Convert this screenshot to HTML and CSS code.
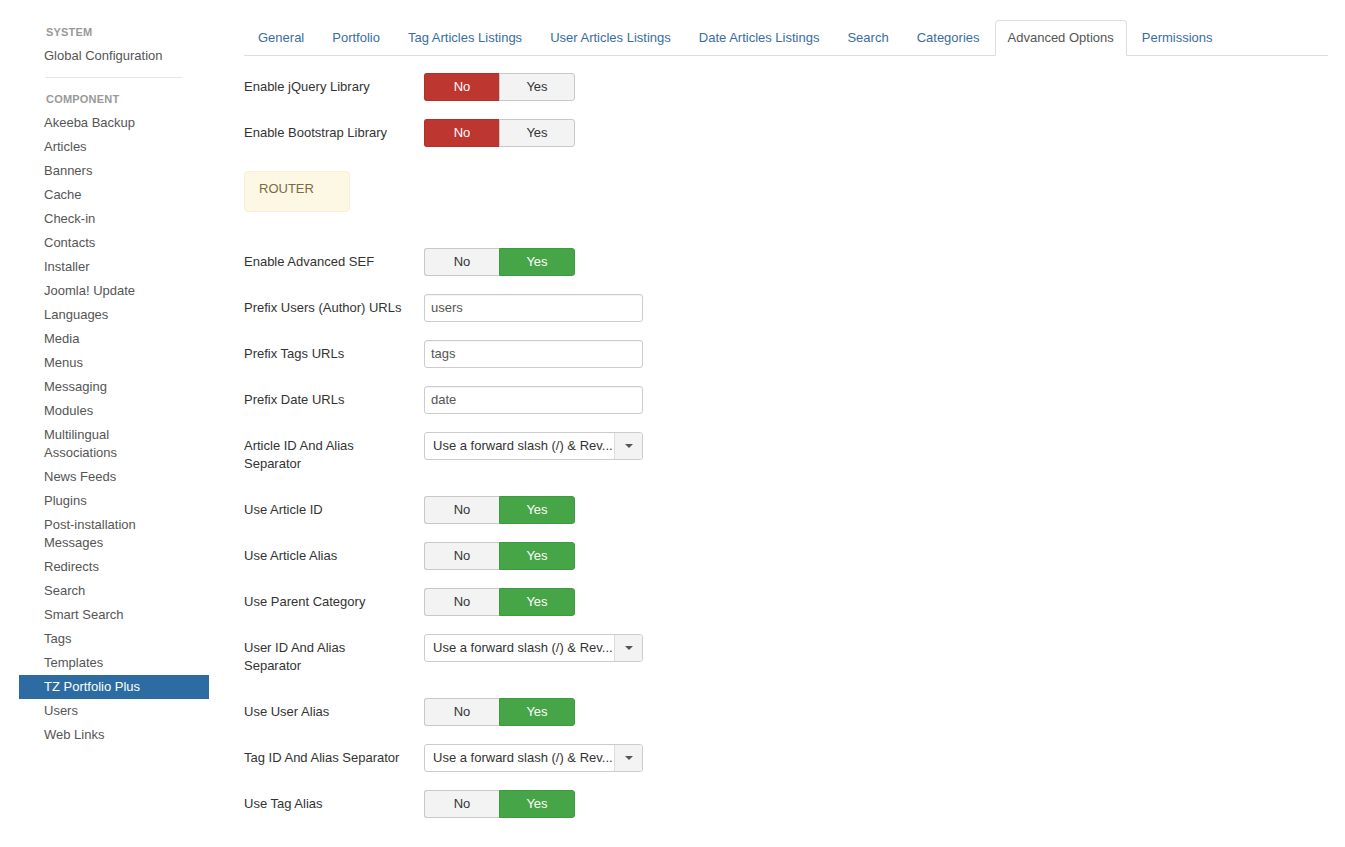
FILE: index.html
```html
<!DOCTYPE html>
<html>
<head>
<meta charset="utf-8">
<link rel="stylesheet" href="styles.css">
</head>
<body>
<div class="page">
  <aside class="sidebar">
    <div class="nav-header">System</div>
    <a class="nav-item" href="#">Global Configuration</a>
    <div class="divider"></div>
    <div class="nav-header">Component</div>
    <a class="nav-item" href="#">Akeeba Backup</a>
    <a class="nav-item" href="#">Articles</a>
    <a class="nav-item" href="#">Banners</a>
    <a class="nav-item" href="#">Cache</a>
    <a class="nav-item" href="#">Check-in</a>
    <a class="nav-item" href="#">Contacts</a>
    <a class="nav-item" href="#">Installer</a>
    <a class="nav-item" href="#">Joomla! Update</a>
    <a class="nav-item" href="#">Languages</a>
    <a class="nav-item" href="#">Media</a>
    <a class="nav-item" href="#">Menus</a>
    <a class="nav-item" href="#">Messaging</a>
    <a class="nav-item" href="#">Modules</a>
    <a class="nav-item" href="#">Multilingual Associations</a>
    <a class="nav-item" href="#">News Feeds</a>
    <a class="nav-item" href="#">Plugins</a>
    <a class="nav-item" href="#">Post-installation Messages</a>
    <a class="nav-item" href="#">Redirects</a>
    <a class="nav-item" href="#">Search</a>
    <a class="nav-item" href="#">Smart Search</a>
    <a class="nav-item" href="#">Tags</a>
    <a class="nav-item" href="#">Templates</a>
    <a class="nav-item active" href="#">TZ Portfolio Plus</a>
    <a class="nav-item" href="#">Users</a>
    <a class="nav-item" href="#">Web Links</a>
  </aside>

  <main class="main">
    <ul class="tabs">
      <li class="tab"><a href="#">General</a></li>
      <li class="tab"><a href="#">Portfolio</a></li>
      <li class="tab"><a href="#">Tag Articles Listings</a></li>
      <li class="tab"><a href="#">User Articles Listings</a></li>
      <li class="tab"><a href="#">Date Articles Listings</a></li>
      <li class="tab"><a href="#">Search</a></li>
      <li class="tab"><a href="#">Categories</a></li>
      <li class="tab active"><a href="#">Advanced Options</a></li>
      <li class="tab"><a href="#">Permissions</a></li>
    </ul>

    <div class="form">
      <div class="row">
        <label class="label">Enable jQuery Library</label>
        <div class="toggle"><span class="opt on-no">No</span><span class="opt">Yes</span></div>
      </div>
      <div class="row">
        <label class="label">Enable Bootstrap Library</label>
        <div class="toggle"><span class="opt on-no">No</span><span class="opt">Yes</span></div>
      </div>

      <div class="alert">ROUTER</div>

      <div class="row">
        <label class="label">Enable Advanced SEF</label>
        <div class="toggle"><span class="opt">No</span><span class="opt on-yes">Yes</span></div>
      </div>
      <div class="row">
        <label class="label">Prefix Users (Author) URLs</label>
        <div class="input">users</div>
      </div>
      <div class="row">
        <label class="label">Prefix Tags URLs</label>
        <div class="input">tags</div>
      </div>
      <div class="row">
        <label class="label">Prefix Date URLs</label>
        <div class="input">date</div>
      </div>
      <div class="row">
        <label class="label">Article ID And Alias Separator</label>
        <div class="select"><span class="select-text">Use a forward slash (/) &amp; Rev...</span><span class="select-arrow"><svg width="8" height="4" viewBox="0 0 8 4"><path d="M0 0h8L4 4z" fill="#555"/></svg></span></div>
      </div>
      <div class="row">
        <label class="label">Use Article ID</label>
        <div class="toggle"><span class="opt">No</span><span class="opt on-yes">Yes</span></div>
      </div>
      <div class="row">
        <label class="label">Use Article Alias</label>
        <div class="toggle"><span class="opt">No</span><span class="opt on-yes">Yes</span></div>
      </div>
      <div class="row">
        <label class="label">Use Parent Category</label>
        <div class="toggle"><span class="opt">No</span><span class="opt on-yes">Yes</span></div>
      </div>
      <div class="row">
        <label class="label">User ID And Alias Separator</label>
        <div class="select"><span class="select-text">Use a forward slash (/) &amp; Rev...</span><span class="select-arrow"><svg width="8" height="4" viewBox="0 0 8 4"><path d="M0 0h8L4 4z" fill="#555"/></svg></span></div>
      </div>
      <div class="row">
        <label class="label">Use User Alias</label>
        <div class="toggle"><span class="opt">No</span><span class="opt on-yes">Yes</span></div>
      </div>
      <div class="row">
        <label class="label">Tag ID And Alias Separator</label>
        <div class="select"><span class="select-text">Use a forward slash (/) &amp; Rev...</span><span class="select-arrow"><svg width="8" height="4" viewBox="0 0 8 4"><path d="M0 0h8L4 4z" fill="#555"/></svg></span></div>
      </div>
      <div class="row">
        <label class="label">Use Tag Alias</label>
        <div class="toggle"><span class="opt">No</span><span class="opt on-yes">Yes</span></div>
      </div>
    </div>
  </main>
</div>
</body>
</html>
```

FILE: styles.css
```css
* { box-sizing: border-box; }
html, body { margin: 0; padding: 0; background: #fff; }
body {
  font-family: "Liberation Sans", Arial, sans-serif;
  font-size: 13px;
  line-height: 18px;
  color: #333;
}
a { text-decoration: none; }

.page {
  display: flex;
  align-items: flex-start;
}

/* Sidebar */
.sidebar {
  width: 190px;
  margin-left: 19px;
  padding-top: 23px;
  display: flex;
  flex-direction: column;
}
.nav-header {
  padding: 3px 25px 6px 27px;
  font-size: 11px;
  font-weight: bold;
  line-height: 12px;
  text-transform: uppercase;
  color: #999;
  letter-spacing: 0.2px;
}
.nav-item {
  display: block;
  padding: 3px 27px 3px 25px;
  line-height: 18px;
  color: #555;
}
.nav-item.active {
  background: #2d6ca2;
  color: #fff;
}
.divider {
  height: 1px;
  background: #e5e5e5;
  margin: 9px 27px 12px 26px;
}

/* Main */
.main {
  flex: 1;
  margin-left: 35px;
  margin-right: 17px;
  padding-top: 20px;
}
.tabs {
  list-style: none;
  margin: 0;
  padding: 0 0 0 1px;
  display: flex;
  border-bottom: 1px solid #ddd;
}
.tab {
  margin-right: 2px;
  margin-bottom: -1px;
}
.tab a {
  display: block;
  padding: 8px 12px;
  line-height: 18px;
  color: #3a6d9f;
  border: 1px solid transparent;
  border-radius: 4px 4px 0 0;
}
.tab.active a {
  color: #555;
  background: #fff;
  border-color: #ddd #ddd transparent #ddd;
}

.form {
  padding-top: 17px;
}
.row {
  display: flex;
  align-items: flex-start;
  margin-bottom: 18px;
}
.label {
  width: 180px;
  flex: none;
  padding: 5px 20px 5px 0;
  line-height: 18px;
  color: #333;
}

.toggle {
  display: flex;
  width: 151px;
  height: 28px;
}
.opt {
  flex: 1;
  display: flex;
  align-items: center;
  justify-content: center;
  background: #f3f3f3;
  color: #333;
  border: 1px solid #c8c8c8;
}
.opt:first-child {
  border-radius: 3px 0 0 3px;
  border-right: none;
}
.opt:last-child {
  border-radius: 0 3px 3px 0;
}
.opt.on-no {
  background: #bd362f;
  border-color: #b3302a;
  color: #fff;
}
.opt.on-yes {
  background: #46a546;
  border-color: #3e9a3e;
  color: #fff;
}

.alert {
  width: 106px;
  height: 41px;
  padding: 8px 14px;
  margin-top: 24px;
  margin-bottom: 36px;
  background: #fcf8e3;
  border: 1px solid #fbeed5;
  border-radius: 4px;
  color: #7d6a45;
  line-height: 18px;
}

.input {
  width: 219px;
  height: 28px;
  padding: 4px 6px;
  border: 1px solid #ccc;
  border-radius: 3px;
  background: #fff;
  color: #555;
  line-height: 18px;
  box-shadow: inset 0 1px 1px rgba(0,0,0,0.05);
}

.select {
  width: 219px;
  height: 28px;
  display: flex;
  border: 1px solid #ccc;
  border-radius: 3px;
  background: #fff;
  overflow: hidden;
}
.select-text {
  flex: 1;
  padding: 4px 0 4px 8px;
  line-height: 18px;
  color: #333;
  white-space: nowrap;
  overflow: hidden;
}
.select-arrow {
  width: 28px;
  flex: none;
  display: flex;
  align-items: center;
  justify-content: center;
  background: #f3f3f3;
  border-left: 1px solid #ddd;
}
```
